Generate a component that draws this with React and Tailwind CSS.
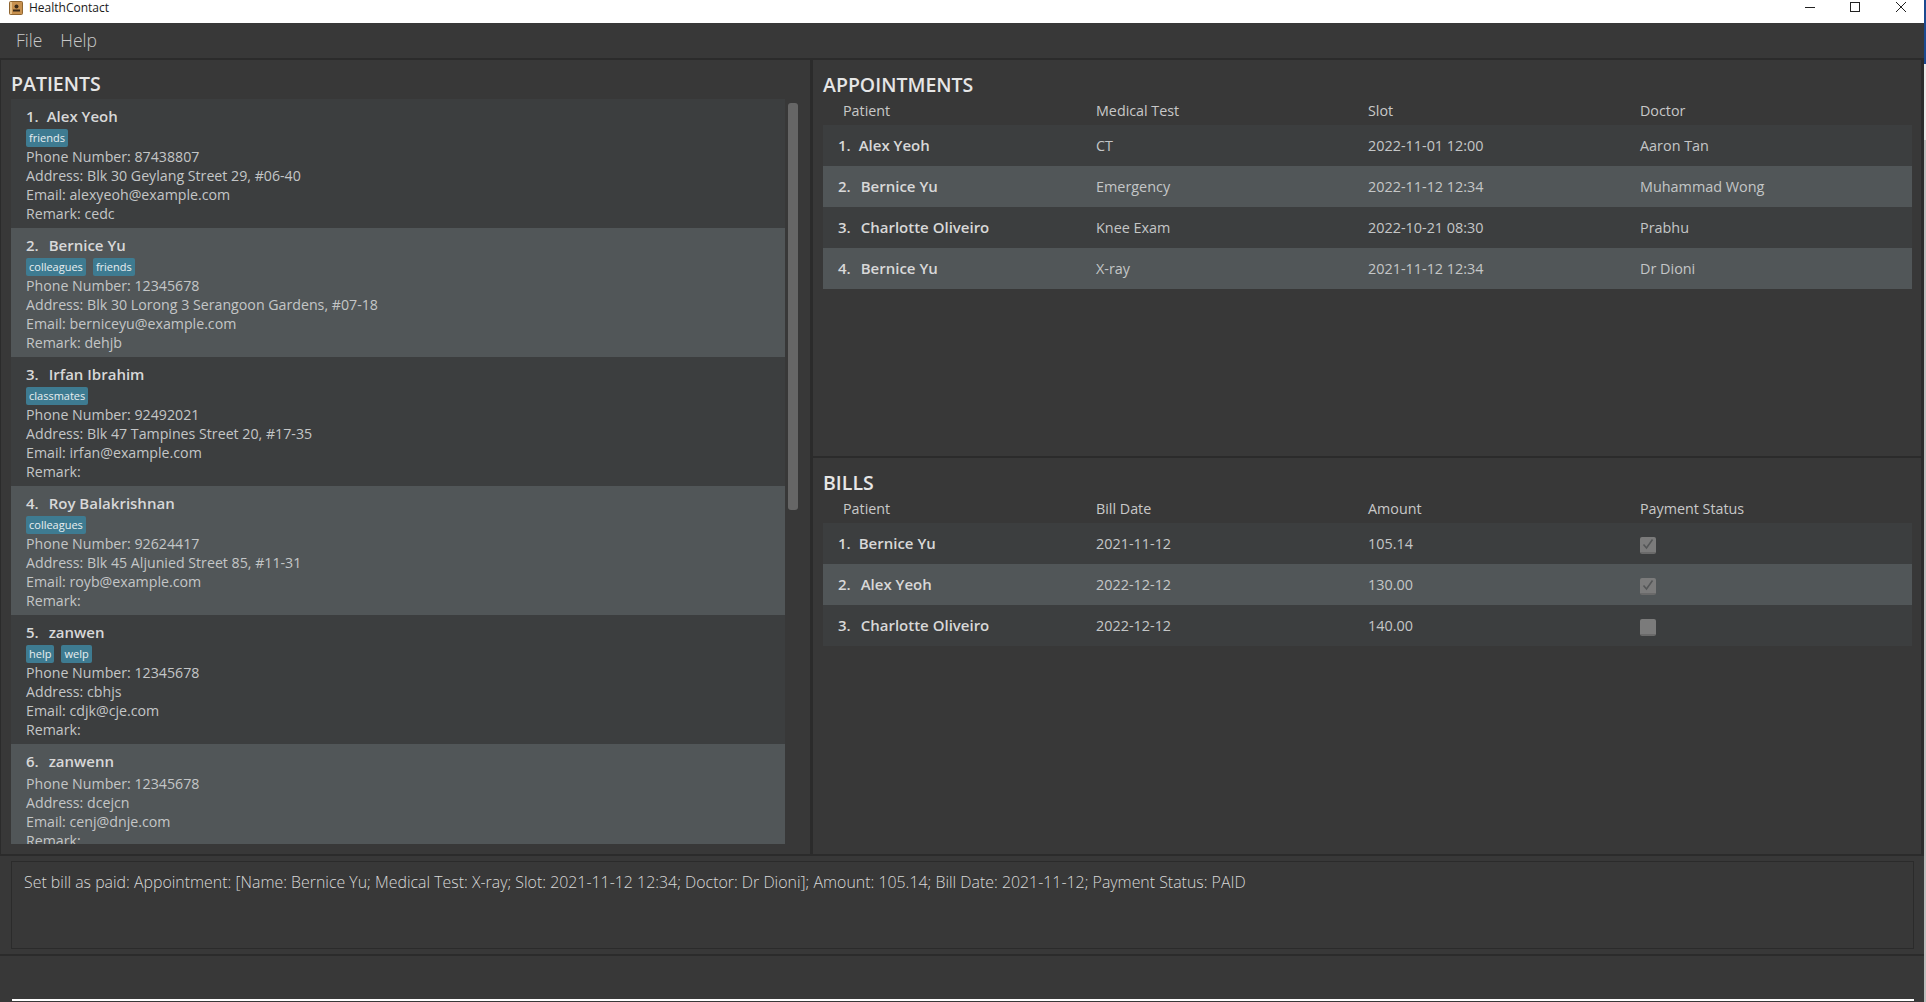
const PATIENTS = [
  { name: 'Alex Yeoh', tags: ['friends'], phone: '87438807', address: 'Blk 30 Geylang Street 29, #06-40', email: 'alexyeoh@example.com', remark: 'cedc' },
  { name: 'Bernice Yu', tags: ['colleagues', 'friends'], phone: '12345678', address: 'Blk 30 Lorong 3 Serangoon Gardens, #07-18', email: 'berniceyu@example.com', remark: 'dehjb' },
  { name: 'Irfan Ibrahim', tags: ['classmates'], phone: '92492021', address: 'Blk 47 Tampines Street 20, #17-35', email: 'irfan@example.com', remark: '' },
  { name: 'Roy Balakrishnan', tags: ['colleagues'], phone: '92624417', address: 'Blk 45 Aljunied Street 85, #11-31', email: 'royb@example.com', remark: '' },
  { name: 'zanwen', tags: ['help', 'welp'], phone: '12345678', address: 'cbhjs', email: 'cdjk@cje.com', remark: '' },
  { name: 'zanwenn', tags: [], phone: '12345678', address: 'dcejcn', email: 'cenj@dnje.com', remark: '' },
];

const APPOINTMENTS = [
  ['Alex Yeoh', 'CT', '2022-11-01 12:00', 'Aaron Tan'],
  ['Bernice Yu', 'Emergency', '2022-11-12 12:34', 'Muhammad Wong'],
  ['Charlotte Oliveiro', 'Knee Exam', '2022-10-21 08:30', 'Prabhu'],
  ['Bernice Yu', 'X-ray', '2021-11-12 12:34', 'Dr Dioni'],
];

const BILLS = [
  ['Bernice Yu', '2021-11-12', '105.14', true],
  ['Alex Yeoh', '2022-12-12', '130.00', true],
  ['Charlotte Oliveiro', '2022-12-12', '140.00', false],
];

const RESULT = 'Set bill as paid: Appointment: [Name: Bernice Yu; Medical Test: X-ray; Slot: 2021-11-12 12:34; Doctor: Dr Dioni]; Amount: 105.14; Bill Date: 2021-11-12; Payment Status: PAID';

const COLUMNS = 'grid grid-cols-[273px_272px_272px_1fr]';

const AppIcon = () => (
  <svg width="14" height="14" viewBox="0 0 14 14" className="ml-[9px] mr-[6px] mt-[1px]">
    <rect x="0.5" y="0.5" width="13" height="13" rx="1" fill="#c8914f" stroke="#8f6530" />
    <rect x="1" y="1" width="2" height="12" fill="#e6c189" />
    <circle cx="7.5" cy="5.5" r="2" fill="#3a2a18" />
    <rect x="4" y="8.5" width="7" height="2" fill="#3a2a18" />
  </svg>
);

const TitleBar = () => (
  <div className="flex h-[23px] items-start bg-white">
    <AppIcon />
    <span className="text-[12px] leading-[16px] text-[#1a1a1a]">HealthContact</span>
    <div className="ml-auto flex items-center pt-[2px]">
      <svg width="10" height="10" viewBox="0 0 10 10" className="mr-[35px]"><path d="M0 5.5h10" stroke="#222" /></svg>
      <svg width="10" height="10" viewBox="0 0 10 10" className="mr-[36px]"><rect x="0.5" y="0.5" width="9" height="9" fill="none" stroke="#222" /></svg>
      <svg width="10" height="10" viewBox="0 0 10 10" className="mr-[18px]"><path d="M0 0l10 10M10 0L0 10" stroke="#222" /></svg>
    </div>
  </div>
);

const PatientCard = ({ patient, index }) => (
  <div className={`h-[129px] shrink-0 pl-[15px] pt-[6px] text-[14.2px] leading-[19px] text-[#c4c6c7] ${index % 2 === 0 ? 'bg-[#3c3e3f]' : 'bg-[#515658]'}`}>
    <div className="flex h-[24px] items-start text-[15px] font-semibold leading-[22px] text-[#d8d8d8]">
      <span className={index === 0 ? 'mr-[8px]' : 'mr-[10px]'}>{index + 1}.</span>
      <span>{patient.name}</span>
    </div>
    {patient.tags.length > 0 && (
      <div className="flex h-[18px] gap-[7px]">
        {patient.tags.map((tag) => (
          <span key={tag} className="rounded-[2px] bg-[#3e7b91] px-[3px] text-[11px] leading-[18px] text-[#e8eef0]">{tag}</span>
        ))}
      </div>
    )}
    <div>Phone Number: {patient.phone}</div>
    <div>Address: {patient.address}</div>
    <div>Email: {patient.email}</div>
    <div>Remark: {patient.remark}</div>
  </div>
);

const SectionTitle = ({ children }) => (
  <div className="h-[30px] text-[19.5px] font-semibold leading-[30px] text-[#e6e6e6]">{children}</div>
);

const TableHead = ({ labels }) => (
  <div className={`${COLUMNS} h-[25px] text-[14.3px] leading-[21px] text-[#c8c8c8]`}>
    {labels.map((label, i) => (
      <div key={label} className={i === 0 ? 'pl-[20px]' : ''}>{label}</div>
    ))}
  </div>
);

const PatientCell = ({ index, name }) => (
  <div className="flex items-center pl-[15px] text-[15px] font-semibold text-[#d8d8d8]">
    <span className={index === 0 ? 'mr-[8px]' : 'mr-[10px]'}>{index + 1}.</span>
    <span>{name}</span>
  </div>
);

const Checkbox = ({ checked }) => (
  <div className="mt-[3px] flex h-[17px] w-[16px] items-center justify-center rounded-[2px] border-b-2 border-[#6a6a6a] bg-[#7b7b7b]">
    {checked && (
      <svg width="12" height="12" viewBox="0 0 12 12">
        <path d="M1.5 6.5L4.5 10L10.5 1.5" fill="none" stroke="#545657" strokeWidth="1.6" />
      </svg>
    )}
  </div>
);

const rowClass = (i) => `${COLUMNS} h-[41px] items-center text-[14.4px] text-[#c4c6c7] ${i % 2 === 0 ? 'bg-[#3c3e3f]' : 'bg-[#515658]'}`;

export default function App() {
  return (
    <div className="flex h-[1002px] w-[1926px] overflow-hidden bg-[#383838] font-['Open_Sans',sans-serif]">
      <div className="flex w-[1924px] flex-col">
        <TitleBar />
        <div className="flex h-[35px] items-center gap-[18px] pl-[16px] text-[17.5px] font-light text-[#c8c8c8]">
          <span>File</span>
          <span>Help</span>
        </div>

        <div className="flex h-[798px] border-y-2 border-[#2b2b2b]">
          <div className="w-[810px] border-l border-[#2b2b2b] pl-[10px]">
            <div className="h-[39px] text-[19.5px] font-semibold leading-[47px] text-[#e6e6e6]">PATIENTS</div>
            <div className="flex h-[745px] overflow-hidden">
              <div className="flex w-[774px] flex-col">
                {PATIENTS.map((patient, i) => (
                  <PatientCard key={patient.name} patient={patient} index={i} />
                ))}
              </div>
              <div className="ml-[3px] mt-[4px] h-[407px] w-[10px] rounded-[3px] bg-[#666666]" />
            </div>
          </div>

          <div className="flex-1 border-x-[3px] border-[#2b2b2b] pl-[10px] pr-[9px]">
            <div className="h-[396px] pt-[10px]">
              <SectionTitle>APPOINTMENTS</SectionTitle>
              <TableHead labels={['Patient', 'Medical Test', 'Slot', 'Doctor']} />
              {APPOINTMENTS.map((row, i) => (
                <div key={i} className={rowClass(i)}>
                  <PatientCell index={i} name={row[0]} />
                  <div>{row[1]}</div>
                  <div>{row[2]}</div>
                  <div>{row[3]}</div>
                </div>
              ))}
            </div>
            <div className="-ml-[10px] -mr-[9px] h-[2px] bg-[#2b2b2b]" />
            <div className="pt-[10px]">
              <SectionTitle>BILLS</SectionTitle>
              <TableHead labels={['Patient', 'Bill Date', 'Amount', 'Payment Status']} />
              {BILLS.map((row, i) => (
                <div key={i} className={rowClass(i)}>
                  <PatientCell index={i} name={row[0]} />
                  <div>{row[1]}</div>
                  <div>{row[2]}</div>
                  <Checkbox checked={row[3]} />
                </div>
              ))}
            </div>
          </div>
        </div>

        <div className="h-[100px] border-b-2 border-[#2b2b2b] pl-[11px] pr-[10px] pt-[5px]">
          <div className="h-[88px] border border-[#2b2b2b] pl-[12px] pt-[7px] text-[15.9px] font-light leading-[26px] text-[#d8d8d8]">{RESULT}</div>
        </div>

        <div className="flex flex-1 items-end pb-px pl-[12px] pr-[10px]">
          <div className="h-[2px] w-full bg-white" />
        </div>
      </div>

      <div className="flex w-[2px] flex-col">
        <div className="h-[64px] bg-[#1b4a8f]" />
        <div className="h-[76px] bg-[#e8e8e8]" />
        <div className="flex-1 bg-[#bdbdbd]" />
      </div>
    </div>
  );
}
